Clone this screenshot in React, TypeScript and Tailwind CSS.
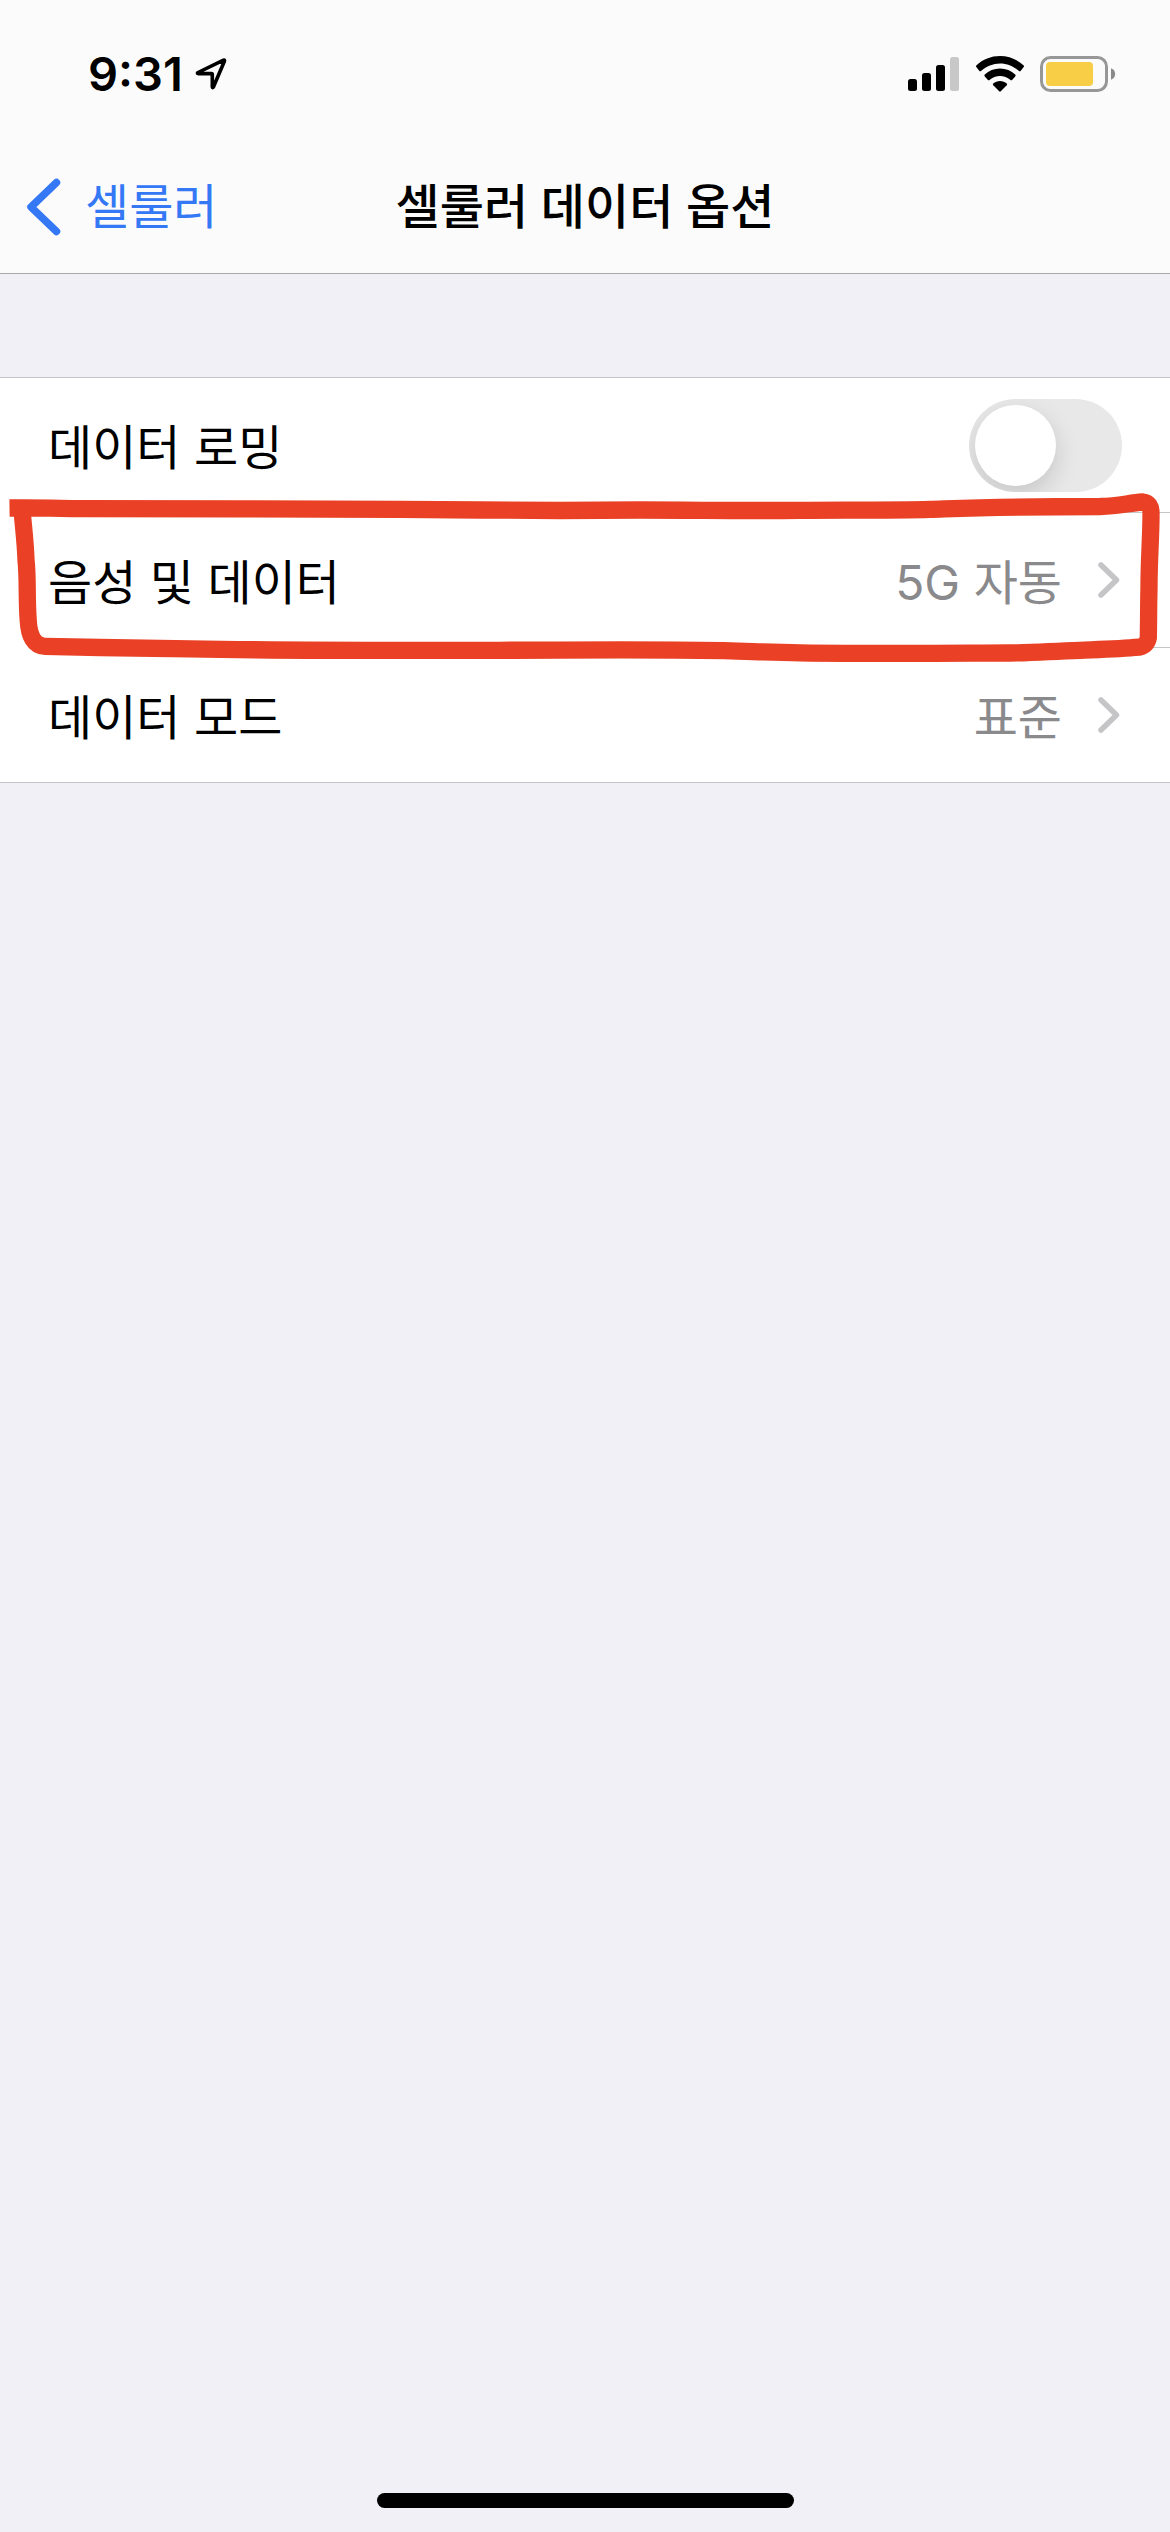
import { useState } from "react";

function LocationIcon() {
  return (
    <svg viewBox="0 0 32 34" className="h-[34px] w-[32px]" fill="none" aria-hidden="true">
      <path
        d="M3 15.5 28.5 3.2Q30 2.6 29.4 4.2L18.3 30.2Q17.5 31.2 17.3 29.8V17.4Q17.3 16.6 16.5 16.6L3.2 16.6Q1.8 16.2 3 15.5Z"
        stroke="#000"
        strokeWidth="3.6"
        strokeLinejoin="round"
      />
    </svg>
  );
}

function SignalIcon() {
  return (
    <svg viewBox="0 0 52 36" className="h-[36px] w-[52px]" aria-hidden="true">
      <rect x="0" y="23" width="9" height="12" rx="2.5" />
      <rect x="14" y="17" width="9" height="18" rx="2.5" />
      <rect x="28" y="9" width="9" height="26" rx="2.5" />
      <rect x="42" y="1" width="9" height="34" rx="2.5" fill="#c8c8c8" />
    </svg>
  );
}

function WifiIcon() {
  return (
    <svg viewBox="0 0 48 36" className="h-[36px] w-[48px]" aria-hidden="true">
      <path d="M24 0C33 0 41.300 3.400 47.500 9.200Q48.500 10.200 47.500 11.200L44.800 14.800Q43.800 15.800 42.700 14.800C37.600 10.200 31 7.400 24 7.400S10.400 10.200 5.300 14.800Q4.200 15.800 3.200 14.800L.5 11.200Q-.5 10.200 .5 9.200C6.700 3.400 15 0 24 0Z" />
      <path d="M24 12.600C29.900 12.600 35.200 14.800 39.200 18.500Q40.200 19.500 39.200 20.500L36.300 23.700Q35.300 24.700 34.200 23.700C31.500 21.300 27.900 19.900 24 19.900S16.500 21.300 13.800 23.700Q12.700 24.700 11.700 23.700L8.800 20.500Q7.800 19.500 8.800 18.500C12.800 14.800 18.100 12.600 24 12.600Z" />
      <path d="M24 25C26.600 25 29 25.900 30.700 27.400Q31.500 28.300 30.700 29.200L24.800 35.300Q24 36 23.200 35.300L17.300 29.200Q16.500 28.300 17.300 27.400C19 25.900 21.400 25 24 25Z" />
    </svg>
  );
}

function BatteryIcon() {
  return (
    <svg viewBox="0 0 76 36" className="h-[36px] w-[76px]" aria-hidden="true">
      <rect x="1.500" y="1.500" width="65" height="33" rx="9" fill="none" stroke="#979797" strokeWidth="3" />
      <rect x="6" y="6" width="47" height="24" rx="4" fill="#f7ce46" />
      <path d="M71 12.200V23.800C73.600 22.800 75.200 20.600 75.200 18S73.600 13.200 71 12.200Z" fill="#8a8a8a" />
    </svg>
  );
}

function Chevron() {
  return (
    <svg viewBox="0 0 22 36" className="h-[36px] w-[22px]" fill="none" aria-hidden="true">
      <path d="M3 3 18.500 18 3 33" stroke="#c5c5c7" strokeWidth="5.500" strokeLinecap="round" strokeLinejoin="round" />
    </svg>
  );
}

// Hand-drawn marker outline around a row
function Marker() {
  return (
    <svg
      viewBox="0 0 1170 180"
      preserveAspectRatio="none"
      className="pointer-events-none absolute inset-x-0 -top-6 z-10 h-[180px] w-full"
      fill="none"
      stroke="#ea4025"
      strokeWidth="17.3"
      aria-hidden="true"
    >
      <path d="M9.500 20C40 19.600 60 20.500 80 20.700C180 21 300 20.600 400 21.300C460 21.600 500 22.500 560 22.500C600 22.500 620 22 640 22C700 22 740 23 800 22.300C860 22 900 22.200 930 21.300C970 20 1000 18.500 1100 18.500C1120 18 1128 15 1143 14C1148 14.500 1151.300 18 1151 26C1151 50 1149 70 1149 100C1148.500 120 1148.700 130 1148.300 150C1147.500 155 1144 158.500 1139 159.200C1120 161 1100 161.500 1080 162.300C1050 163 1040 165 1010 165C940 165.300 880 166 800 164.800C760 164.300 740 162.500 700 162.300C640 161.500 560 162 500 162.300C400 162.500 300 163 190 160.800L100 159.500L45 158.300C34 158 29 148 28.200 132C26.500 110 28 90 26 72C25.500 55 23.500 40 22.200 24" />
    </svg>
  );
}

type NavRowProps = {
  label: string;
  value: string;
  marked?: boolean;
};

function NavRow({ label, value, marked }: NavRowProps) {
  return (
    <li className="relative h-[135px] pl-12">
      <button
        type="button"
        className="flex h-full w-full items-center border-t border-[#c6c6c8] pr-[50px] text-left"
      >
        <span className="flex-1 pt-1.5">{label}</span>
        <span className="mr-9 pt-1.5 text-[#8a8a8d]">{value}</span>
        <Chevron />
      </button>
      {marked && <Marker />}
    </li>
  );
}

export default function App() {
  const [roaming, setRoaming] = useState(false);

  return (
    <div className="flex min-h-screen flex-col bg-[#f1f0f6] font-['Inter','Noto_Sans_CJK_KR',sans-serif] text-[48px] leading-[72px] text-black">
      <header className="border-b border-[#a9a9ac] bg-[#fbfbfb]">
        <div className="flex h-[140px] items-center justify-between pt-2 pr-[54px] pl-[88px]">
          <div className="flex items-center gap-3">
            <span className="text-[47px] font-semibold">9:31</span>
            <LocationIcon />
          </div>
          <div className="flex items-center gap-4">
            <SignalIcon />
            <WifiIcon />
            <BatteryIcon />
          </div>
        </div>

        <nav className="grid h-[133px] grid-cols-[1fr_auto_1fr] items-center">
          <a href="#" className="flex items-center gap-6 pl-[26px] text-[#3478f6]">
            <svg viewBox="0 0 35 58" className="h-[58px] w-[35px]" fill="none" aria-hidden="true">
              <path d="M30.500 4.500 5 29 30.500 53.500" stroke="#3478f6" strokeWidth="7.500" strokeLinecap="round" strokeLinejoin="round" />
            </svg>
            셀룰러
          </a>
          <h1 className="font-medium">셀룰러 데이터 옵션</h1>
        </nav>
      </header>

      <main className="mt-[103px]">
        <ul className="border-b border-[#c6c6c8] bg-white">
          <li className="flex h-[135px] items-center border-t border-[#c6c6c8] pr-12 pl-12">
            <label htmlFor="roaming" className="flex-1 pt-1.5">
              데이터 로밍
            </label>
            <input
              id="roaming"
              type="checkbox"
              role="switch"
              checked={roaming}
              onChange={(e) => setRoaming(e.target.checked)}
              className="h-[93px] w-[153px] appearance-none overflow-hidden rounded-full bg-[#e8e8e8] p-[6px] before:block before:size-[81px] before:rounded-full before:bg-white before:shadow-[0_9px_24px_rgba(0,0,0,0.15)] checked:bg-[#34c759] checked:before:translate-x-[60px]"
            />
          </li>
          <NavRow label="음성 및 데이터" value="5G 자동" marked />
          <NavRow label="데이터 모드" value="표준" />
        </ul>
      </main>

      <div className="mt-auto flex justify-center pb-6">
        <div className="h-[15px] w-[417px] rounded-full bg-black" />
      </div>
    </div>
  );
}
